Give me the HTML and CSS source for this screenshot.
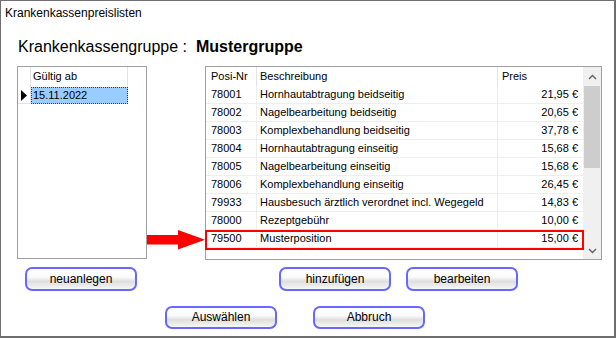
FILE: index.html
```html
<!DOCTYPE html>
<html>
<head>
<meta charset="utf-8">
<link rel="stylesheet" href="styles.css">
</head>
<body>
<div class="window">
  <div class="title">Krankenkassenpreislisten</div>
  <div class="heading">Krankenkassengruppe :<b class="group">Mustergruppe</b></div>
  <div class="main">
    <div class="grid-left">
      <div class="lrow lhead">
        <div class="rh"></div>
        <div class="lcol">Gültig ab</div>
      </div>
      <div class="lrow">
        <div class="rh"><svg class="pointer" width="6" height="11" viewBox="0 0 6 11"><polygon points="0,0 6,5.5 0,11" fill="#000"/></svg></div>
        <div class="lcol sel">15.11.2022</div>
      </div>
    </div>
    <div class="grid-right">
      <div class="table">
        <div class="row head"><div class="c1">Posi-Nr</div><div class="c2">Beschreibung</div><div class="c3">Preis</div></div>
        <div class="row"><div class="c1">78001</div><div class="c2">Hornhautabtragung beidseitig</div><div class="c3 num">21,95 €</div></div>
        <div class="row"><div class="c1">78002</div><div class="c2">Nagelbearbeitung beidseitig</div><div class="c3 num">20,65 €</div></div>
        <div class="row"><div class="c1">78003</div><div class="c2">Komplexbehandlung beidseitig</div><div class="c3 num">37,78 €</div></div>
        <div class="row"><div class="c1">78004</div><div class="c2">Hornhautabtragung einseitig</div><div class="c3 num">15,68 €</div></div>
        <div class="row"><div class="c1">78005</div><div class="c2">Nagelbearbeitung einseitig</div><div class="c3 num">15,68 €</div></div>
        <div class="row"><div class="c1">78006</div><div class="c2">Komplexbehandlung einseitig</div><div class="c3 num">26,45 €</div></div>
        <div class="row"><div class="c1">79933</div><div class="c2">Hausbesuch ärztlich verordnet incl. Wegegeld</div><div class="c3 num">14,83 €</div></div>
        <div class="row"><div class="c1">78000</div><div class="c2">Rezeptgebühr</div><div class="c3 num">10,00 €</div></div>
        <div class="row"><div class="c1">79500</div><div class="c2">Musterposition</div><div class="c3 num">15,00 €</div></div>
      </div>
      <div class="scrollbar">
        <div class="sb-btn"><svg width="9" height="6" viewBox="0 0 9 6"><polyline points="1,5 4.5,1.5 8,5" fill="none" stroke="#606060" stroke-width="1.4"/></svg></div>
        <div class="thumb"></div>
        <div class="sb-space"></div>
        <div class="sb-btn"><svg width="9" height="6" viewBox="0 0 9 6"><polyline points="1,1 4.5,4.5 8,1" fill="none" stroke="#606060" stroke-width="1.4"/></svg></div>
      </div>
      <div class="highlight"></div>
      <svg class="arrow" width="58" height="20" viewBox="0 0 58 20"><polygon points="0,5 31,5 31,0 58,9.8 31,19.6 31,14.6 0,14.6" fill="#f00"/></svg>
    </div>
  </div>
  <div class="btnrow r1">
    <div class="btn b-neu">neuanlegen</div>
    <div class="btn b-hinzu">hinzufügen</div>
    <div class="btn b-bearb">bearbeiten</div>
  </div>
  <div class="btnrow r2">
    <div class="btn b-ausw">Auswählen</div>
    <div class="btn b-abbr">Abbruch</div>
  </div>
</div>
</body>
</html>
```
FILE: styles.css
```css
* { box-sizing: border-box; }
html, body { margin: 0; padding: 0; background: #fff; }
body { font-family: "Liberation Sans", Arial, sans-serif; color: #000; }

.window {
  width: 616px;
  height: 338px;
  border: 1px solid #6e6e6e;
  border-right-width: 2px;
  border-bottom-width: 2px;
  background: #fff;
  display: flex;
  flex-direction: column;
  overflow: hidden;
}

.title {
  height: 37px;
  padding: 4px 0 0 4px;
  font-size: 12px;
  line-height: 16px;
  flex: none;
}

.heading {
  height: 18px;
  line-height: 18px;
  font-size: 16px;
  padding-left: 17px;
  flex: none;
  color: #000;
}
.group { margin-left: 9px; font-weight: bold; }

.main {
  margin-top: 10px;
  height: 194px;
  padding-left: 16px;
  display: flex;
  gap: 58px;
  flex: none;
}

/* left grid */
.grid-left {
  width: 130px;
  height: 193px;
  border: 1px solid #a0a0a0;
  font-size: 11px;
}
.lrow { display: flex; }
.lhead { height: 20px; }
.lrow .rh {
  width: 13px;
  border-right: 1px solid #e3e3e3;
  border-bottom: 1px solid #e3e3e3;
  display: flex;
  align-items: center;
  padding-left: 3px;
}
.lhead .rh { border-bottom: none; }
.lcol {
  width: 97px;
  border-right: 1px solid #e3e3e3;
  padding-left: 2px;
  line-height: 19px;
}
.lrow:not(.lhead) { height: 17px; }
.lrow:not(.lhead) .lcol { line-height: 15px; }
.sel {
  background: #99ccff;
  border: 1px dotted #404040;
  padding-left: 1px;
}

/* right grid */
.grid-right {
  position: relative;
  width: 397px;
  height: 194px;
  border: 1px solid #a0a0a0;
  display: flex;
  font-size: 11px;
}
.table { width: 377px; }
.row {
  display: flex;
  height: 18px;
  line-height: 17px;
  border-bottom: 1px solid #eeeeee;
}
.row.head { height: 19px; line-height: 19px; border-bottom: none; }
.row > div { white-space: nowrap; overflow: hidden; }
.c1 { width: 51px; padding-left: 5px; border-right: 1px solid #eeeeee; }
.c2 { width: 241px; padding-left: 3px; border-right: 1px solid #eeeeee; }
.c3 { width: 85px; padding-left: 4px; }
.head .c1, .head .c2 { border-right-color: #e5e5e5; }
.c3.num { text-align: right; padding-right: 5px; padding-left: 0; }

.scrollbar {
  width: 18px;
  margin-left: 0;
  background: #f0f0f0;
  display: flex;
  flex-direction: column;
}
.sb-btn {
  height: 19px;
  display: flex;
  align-items: center;
  justify-content: center;
}
.thumb { height: 82px; background: #cdcdcd; margin: 0 1px 0 1px; }
.sb-space { flex: 1; }
.scrollbar .sb-btn:last-child { height: 16px; }

.highlight {
  position: absolute;
  left: -1px;
  top: 163px;
  width: 379px;
  height: 20px;
  border: 2px solid #f00;
}
.arrow {
  position: absolute;
  left: -59px;
  top: 163px;
}

/* buttons */
.btnrow { display: flex; flex: none; }
.r1 { margin-top: 7px; padding-left: 24px; }
.r2 { margin-top: 15px; padding-left: 164px; }
.btn {
  width: 112px;
  height: 23px;
  border: 2px solid #6868ff;
  border-radius: 7px;
  background: linear-gradient(to bottom, #ffffff 0%, #fbfbfb 40%, #dedede 62%, #ebebeb 82%, #f7f7f7 100%);
  font-size: 12px;
  line-height: 19px;
  text-align: center;
  color: #000;
}
.r1 .btn { height: 24px; line-height: 20px; }
.b-hinzu { margin-left: 142px; }
.b-bearb { margin-left: 15px; }
.b-abbr { margin-left: 36px; }
```
